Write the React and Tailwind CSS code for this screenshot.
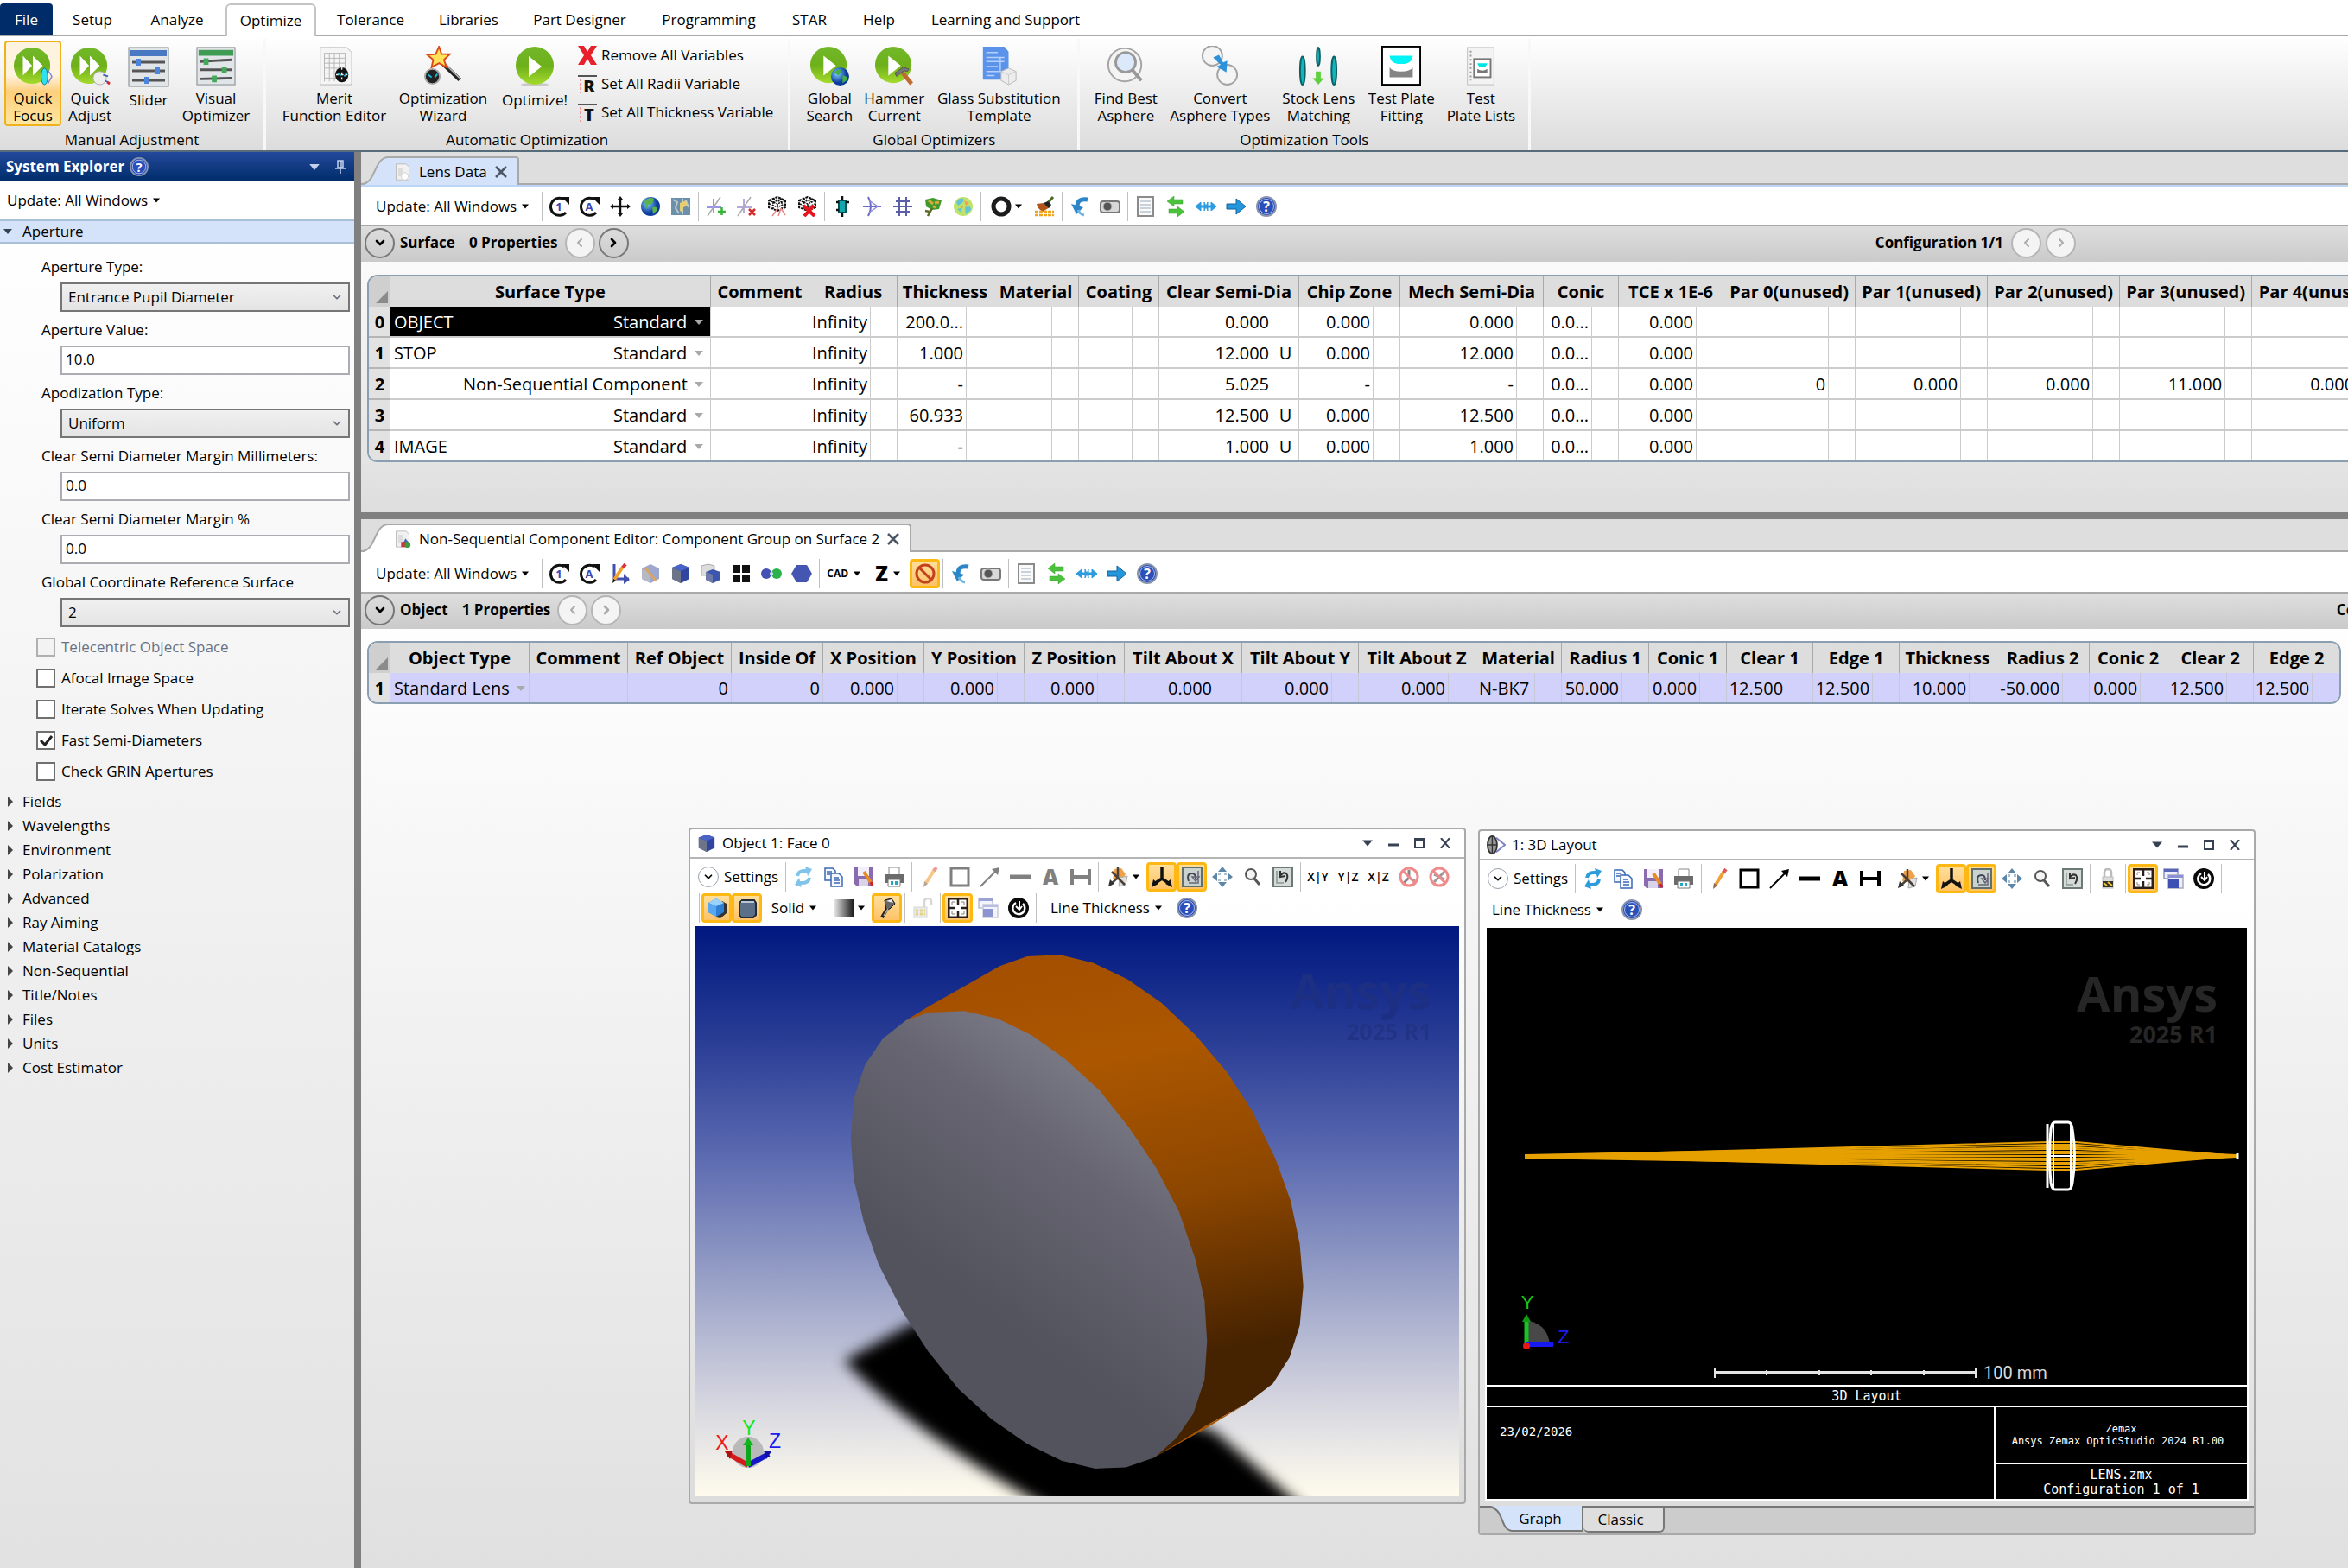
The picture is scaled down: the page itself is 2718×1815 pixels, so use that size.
import { ChevronDown, ChevronLeft, ChevronRight } from 'lucide-react';
import clsx from 'clsx';

const menuTabs = [
  { label: 'Setup', width: 'w-[92px]' },
  { label: 'Analyze', width: 'w-[104px]' },
  { label: 'Optimize', width: 'w-[105px]', active: true },
  { label: 'Tolerance', width: 'w-[118px]' },
  { label: 'Libraries', width: 'w-[109px]' },
  { label: 'Part Designer', width: 'w-[148px]' },
  { label: 'Programming', width: 'w-[151px]' },
  { label: 'STAR', width: 'w-[82px]' },
  { label: 'Help', width: 'w-[79px]' },
  { label: 'Learning and Support', width: 'w-[214px]' },
];

const ribbonGroups = [
  {
    title: 'Manual Adjustment',
    pad: 'pl-[5px] pr-3',
    buttons: [
      { lines: ['Quick', 'Focus'], icon: 'quickFocus', width: 'w-[66px]', active: true },
      { lines: ['Quick', 'Adjust'], icon: 'quickAdjust', width: 'w-[66px]' },
      { lines: ['Slider'], icon: 'slider', width: 'w-[70px]' },
      { lines: ['Visual', 'Optimizer'], icon: 'visualOptimizer', width: 'w-[86px]' },
    ],
  },
  {
    title: 'Automatic Optimization',
    pad: 'pl-4 pr-[17px]',
    buttons: [
      { lines: ['Merit', 'Function Editor'], icon: 'merit', width: 'w-[126px]' },
      { lines: ['Optimization', 'Wizard'], icon: 'wizard', width: 'w-[126px]' },
      { lines: ['Optimize!'], icon: 'optimize', width: 'w-[86px]' },
    ],
    list: [
      { label: 'Remove All Variables', icon: 'removeVars' },
      { label: 'Set All Radii Variable', icon: 'setRadii' },
      { label: 'Set All Thickness Variable', icon: 'setThickness' },
    ],
  },
  {
    title: 'Global Optimizers',
    pad: 'px-2',
    buttons: [
      { lines: ['Global', 'Search'], icon: 'globalSearch', width: 'w-[74px]' },
      { lines: ['Hammer', 'Current'], icon: 'hammer', width: 'w-[76px]' },
      { lines: ['Glass Substitution', 'Template'], icon: 'glass', width: 'w-[166px]' },
    ],
  },
  {
    title: 'Optimization Tools',
    pad: 'pl-[7px] pr-2',
    buttons: [
      { lines: ['Find Best', 'Asphere'], icon: 'findAsphere', width: 'w-[92px]' },
      { lines: ['Convert', 'Asphere Types'], icon: 'convert', width: 'w-[126px]' },
      { lines: ['Stock Lens', 'Matching'], icon: 'stockLens', width: 'w-[102px]' },
      { lines: ['Test Plate', 'Fitting'], icon: 'plateFitting', width: 'w-[90px]' },
      { lines: ['Test', 'Plate Lists'], icon: 'plateLists', width: 'w-[94px]' },
    ],
  },
];

const apertureFields = [
  { id: 'ap-type', label: 'Aperture Type:', kind: 'select', value: 'Entrance Pupil Diameter' },
  { id: 'ap-value', label: 'Aperture Value:', kind: 'text', value: '10.0' },
  { id: 'apod', label: 'Apodization Type:', kind: 'select', value: 'Uniform' },
  { id: 'margin-mm', label: 'Clear Semi Diameter Margin Millimeters:', kind: 'text', value: '0.0' },
  { id: 'margin-pct', label: 'Clear Semi Diameter Margin %', kind: 'text', value: '0.0' },
  { id: 'gcrs', label: 'Global Coordinate Reference Surface', kind: 'select', value: '2' },
];

const apertureChecks = [
  { label: 'Telecentric Object Space', disabled: true },
  { label: 'Afocal Image Space' },
  { label: 'Iterate Solves When Updating' },
  { label: 'Fast Semi-Diameters', checked: true },
  { label: 'Check GRIN Apertures' },
];

const explorerSections = [
  'Fields', 'Wavelengths', 'Environment', 'Polarization', 'Advanced', 'Ray Aiming',
  'Material Catalogs', 'Non-Sequential', 'Title/Notes', 'Files', 'Units', 'Cost Estimator',
];

const lensColumns = [
  { label: 'Surface Type', width: 'w-[371px]', type: true },
  { label: 'Comment', width: 'w-[114px]' },
  { label: 'Radius', width: 'w-[71px]', solve: true },
  { label: 'Thickness', width: 'w-[80px]', solve: true },
  { label: 'Material', width: 'w-[68px]', solve: true },
  { label: 'Coating', width: 'w-[62px]', solve: true },
  { label: 'Clear Semi-Dia', width: 'w-[131px]', solve: true },
  { label: 'Chip Zone', width: 'w-[86px]', solve: true },
  { label: 'Mech Semi-Dia', width: 'w-[135px]', solve: true },
  { label: 'Conic', width: 'w-[56px]', solve: true },
  { label: 'TCE x 1E-6', width: 'w-[90px]', solve: true },
  { label: 'Par 0(unused)', width: 'w-[122px]', solve: true },
  { label: 'Par 1(unused)', width: 'w-[122px]', solve: true },
  { label: 'Par 2(unused)', width: 'w-[122px]', solve: true },
  { label: 'Par 3(unused)', width: 'w-[122px]', solve: true },
  { label: 'Par 4(unused)', width: 'w-[122px]', solve: true },
];

const lensRows = [
  { id: 0, name: 'OBJECT', type: 'Standard', selected: true, cells: ['', 'Infinity', '200.0...', '', '', '0.000', '0.000', '0.000', '0.0...', '0.000', '', '', '', '', ''] },
  { id: 1, name: 'STOP', type: 'Standard', cells: ['', 'Infinity', '1.000', '', '', '12.000', '0.000', '12.000', '0.0...', '0.000', '', '', '', '', ''], flags: { 5: 'U' } },
  { id: 2, name: '', type: 'Non-Sequential Component', cells: ['', 'Infinity', '-', '', '', '5.025', '-', '-', '0.0...', '0.000', '0', '0.000', '0.000', '11.000', '0.000'] },
  { id: 3, name: '', type: 'Standard', cells: ['', 'Infinity', '60.933', '', '', '12.500', '0.000', '12.500', '0.0...', '0.000', '', '', '', '', ''], flags: { 5: 'U' } },
  { id: 4, name: 'IMAGE', type: 'Standard', cells: ['', 'Infinity', '-', '', '', '1.000', '0.000', '1.000', '0.0...', '0.000', '', '', '', '', ''], flags: { 5: 'U' } },
];

const objectColumns = [
  { label: 'Object Type', width: 'w-[161px]', type: true },
  { label: 'Comment', width: 'w-[114px]' },
  { label: 'Ref Object', width: 'w-[120px]' },
  { label: 'Inside Of', width: 'w-[106px]' },
  { label: 'X Position', width: 'w-[86px]', solve: true },
  { label: 'Y Position', width: 'w-[85px]', solve: true },
  { label: 'Z Position', width: 'w-[85px]', solve: true },
  { label: 'Tilt About X', width: 'w-[105px]', solve: true },
  { label: 'Tilt About Y', width: 'w-[104px]', solve: true },
  { label: 'Tilt About Z', width: 'w-[104px]', solve: true },
  { label: 'Material', width: 'w-[69px]', solve: true },
  { label: 'Radius 1', width: 'w-[70px]', solve: true },
  { label: 'Conic 1', width: 'w-[59px]', solve: true },
  { label: 'Clear 1', width: 'w-[69px]', solve: true },
  { label: 'Edge 1', width: 'w-[69px]', solve: true },
  { label: 'Thickness', width: 'w-[81px]', solve: true },
  { label: 'Radius 2', width: 'w-[77px]', solve: true },
  { label: 'Conic 2', width: 'w-[59px]', solve: true },
  { label: 'Clear 2', width: 'w-[69px]', solve: true },
  { label: 'Edge 2', width: 'w-[68px]', solve: true },
];

const objectRows = [
  {
    id: 1,
    name: '',
    type: 'Standard Lens',
    cells: ['', '0', '0', '0.000', '0.000', '0.000', '0.000', '0.000', '0.000', 'N-BK7', '50.000', '0.000', '12.500', '12.500', '10.000', '-50.000', '0.000', '12.500', '12.500'],
  },
];

// 48 x 48 ribbon drawings
const bigIcons = {
  quickFocus: (
    <>
      <circle cx="23" cy="24" r="22" fill="url(#green)" />
      <path d="M12 12l11 12-11 12zM24 12l12 12-12 12z" fill="#fff" />
      <ellipse cx="38" cy="37" rx="4" ry="10" fill="#2fe0ee" stroke="#0e7f95" />
      <path d="M42 29l5 8-5 9" fill="none" stroke="#7d86d8" strokeWidth="1.5" />
    </>
  ),
  quickAdjust: (
    <>
      <circle cx="23" cy="24" r="22" fill="url(#green)" />
      <path d="M12 12l11 12-11 12zM24 12l12 12-12 12z" fill="#fff" />
      <circle cx="36" cy="39" r="8" fill="#eee" stroke="#aaa" />
      <path d="M40 35l6 2M42 42l6 3" stroke="#3f64b5" strokeWidth="2" />
      <path d="M45 44l3 2" stroke="#e02525" strokeWidth="3" />
    </>
  ),
  slider: (
    <>
      <rect x="1" y="2" width="46" height="45" fill="#e2e5e8" stroke="#7d858c" />
      <rect x="3" y="5" width="42" height="7" fill="#4a79c4" />
      <path d="M5 19h38M5 29h38M5 40h38" stroke="#555" strokeWidth="3" />
      <path d="M9 15h6v8H9zM31 25h6v8h-6zM19 36h6v8h-6z" fill="#4c86dc" />
    </>
  ),
  visualOptimizer: (
    <>
      <rect x="1" y="2" width="46" height="45" fill="#e2e5e8" stroke="#7d858c" />
      <rect x="3" y="5" width="42" height="7" fill="#3f9a52" />
      <path d="M5 19l38-2M5 29h38M5 40l38-1" stroke="#555" strokeWidth="3" />
      <path d="M9 15h6v8H9zM31 25h6v8h-6zM19 36h6v8h-6z" fill="#45a95c" />
    </>
  ),
  merit: (
    <>
      <path d="M7 2h32l6 6v39H7z" fill="#f5f5f5" stroke="#b5b5b5" />
      <path d="M12 9h26M12 15h26M12 21h26M12 27h26M12 33h26M12 39h26M12 9v34M18 9v34M24 9v34M30 9v34M37 9v34" stroke="#b5b5b5" />
      <ellipse cx="33" cy="35" rx="8" ry="9" fill="#111" />
      <path d="M33 26v18M26 35h14" stroke="#eee" strokeWidth="1.5" strokeDasharray="3 3" />
      <path d="M28 33l4 3M36 37l3-4" stroke="#19b7d8" strokeWidth="2" />
    </>
  ),
  wizard: (
    <>
      <path d="M24 22l20 19" stroke="#222" strokeWidth="5" />
      <path d="M26 22l18 17" stroke="#bbb" strokeWidth="1.5" />
      <path d="M19 1l3 9 10 0-7 7 3 9-9-5-9 5 2-9-7-6 10-1z" fill="#ffe25a" stroke="#dd4a1a" strokeWidth="2" />
      <ellipse cx="11" cy="37" rx="9" ry="9" fill="#222" stroke="#aaa" strokeWidth="2" />
      <path d="M6 35l4 3M14 38l3-4" stroke="#19b7d8" strokeWidth="2" />
    </>
  ),
  optimize: (
    <>
      <ellipse cx="24" cy="45" rx="16" ry="2" fill="#c9c9c9" />
      <circle cx="24" cy="23" r="22" fill="url(#green)" />
      <path d="M17 12l15 12-15 12z" fill="#fff" />
    </>
  ),
  globalSearch: (
    <>
      <circle cx="23" cy="23" r="22" fill="url(#green)" />
      <path d="M17 12l15 12-15 12z" fill="#fff" />
      <circle cx="37" cy="37" r="11" fill="url(#globe)" />
      <path d="M30 32q5-5 9-2l-4 6zM40 36q6 0 6 5l-6 4z" fill="#45b049" />
    </>
  ),
  hammer: (
    <>
      <circle cx="23" cy="23" r="22" fill="url(#green)" />
      <path d="M17 12l15 12-15 12z" fill="#fff" />
      <path d="M33 31l12 15" stroke="#bd6a33" strokeWidth="5" />
      <path d="M25 33l10-7 7 2-2 3-4-1-9 7z" fill="#777" stroke="#555" />
    </>
  ),
  glass: (
    <>
      <path d="M5 1h26l5 6v34H5z" fill="#5b93ea" />
      <path d="M9 8h14M9 14h22M9 19h22M9 25h14M9 31h22M9 36h10M26 14v16" stroke="#b5d2ff" strokeWidth="1.5" />
      <path d="M36 27l9 4v11l-9 5-9-5V31z" fill="#ececec" stroke="#b9b9b9" />
      <path d="M27 31l9 4 9-4M36 35v12" stroke="#c9c9c9" fill="none" />
    </>
  ),
  findAsphere: (
    <>
      <circle cx="23" cy="23" r="20" fill="#f4f4f4" stroke="#a4a4a4" strokeWidth="2" />
      <ellipse cx="24" cy="20" rx="12" ry="12" fill="#dce9fa" stroke="#999" strokeWidth="3" />
      <path d="M32 29l11 13" stroke="#999" strokeWidth="4" />
    </>
  ),
  convert: (
    <>
      <circle cx="15" cy="12" r="12" fill="#f4f4f4" stroke="#a4a4a4" strokeWidth="2" />
      <circle cx="33" cy="35" r="12" fill="#f4f4f4" stroke="#a4a4a4" strokeWidth="2" />
      <path d="M16 14l7-3 5 9 5-2-1 14-12-7 5-2z" fill="#2d92dc" />
    </>
  ),
  stockLens: (
    <>
      <g fill="#12b5bb" stroke="#0b6166" strokeWidth="2">
        <ellipse cx="5" cy="30" rx="3" ry="17" />
        <ellipse cx="24" cy="13" rx="2" ry="11" />
        <ellipse cx="43" cy="30" rx="3" ry="17" />
      </g>
      <path d="M21 31h6v8h4l-7 8-7-8h4z" fill="#5fd13e" />
    </>
  ),
  plateFitting: (
    <>
      <rect x="1" y="1" width="46" height="46" fill="#fff" stroke="#000" strokeWidth="2" />
      <path d="M10 12h28q-1 9-10 10h-8q-9-1-10-10z" fill="#00f4f6" />
      <path d="M10 26q3 5 14 5t14-5v12H10z" fill="#848484" />
    </>
  ),
  plateLists: (
    <>
      <rect x="8" y="2" width="32" height="45" fill="#f3f3f3" stroke="#bdbdbd" />
      <path d="M12 6v36" stroke="#999" strokeWidth="2" strokeDasharray="2 3" />
      <rect x="16" y="16" width="20" height="22" fill="#fff" stroke="#777" strokeWidth="2" />
      <path d="M20 21h12q-1 5-6 5t-6-5z" fill="#00e4e6" />
      <path d="M20 28q6 4 12 0v5H20z" fill="#777" />
    </>
  ),
};

const blackLoop = (
  <>
    <path d="M17 4A10 10 0 1 0 19 19" fill="none" stroke="#111" strokeWidth="3" />
    <path d="M14 1h9v9z" fill="#111" />
  </>
);
const noSign = (color) => (
  <>
    <circle cx="12" cy="12" r="10" fill="none" stroke={color} strokeWidth="3" />
    <path d="M5 5l14 14" stroke={color} strokeWidth="3" />
  </>
);

// 24 x 24 toolbar drawings
const icons = {
  update1: (
    <>
      {blackLoop}
      <text x="11" y="17" fontSize="13" fontWeight="700" textAnchor="middle" fill="#3b46b8">1</text>
    </>
  ),
  updateA: (
    <>
      {blackLoop}
      <text x="11" y="17" fontSize="13" fontWeight="700" textAnchor="middle" fill="#3b46b8">A</text>
    </>
  ),
  cross: (
    <>
      <path d="M12 2v20M2 12h20" stroke="#111" strokeWidth="2.500" />
      <path d="M12 0l3 4H9zM12 24l3-4H9zM0 12l4-3v6zM24 12l-4-3v6z" fill="#111" />
    </>
  ),
  globe: (
    <>
      <circle cx="12" cy="12" r="11" fill="url(#globe)" />
      <path d="M5 6q6-6 11-3l-2 6-5 1-2 5zM14 13q6-2 6 3l-5 5z" fill="#58b34e" />
    </>
  ),
  map: (
    <>
      <rect x="1" y="2" width="22" height="20" fill="#6c8faa" />
      <path d="M3 4l5 3-2 7 4 6M14 3v18M18 5l3 8" stroke="#b9c9cf" strokeWidth="2" fill="none" />
      <path d="M11 8l7-3 2 6-5 2-1 6-3-2z" fill="#e6cf72" />
    </>
  ),
  axisAdd: (
    <>
      <path d="M1 13h17M9 3v17" stroke="#9a94e6" strokeWidth="2" />
      <path d="M17 1L2 23" stroke="#aaa" strokeWidth="1.500" />
      <path d="M14 18h9M18.500 13v9" stroke="#35b535" strokeWidth="2.500" />
    </>
  ),
  axisDel: (
    <>
      <path d="M1 13h17M9 3v17" stroke="#b5a9e0" strokeWidth="2" />
      <path d="M17 1L2 23" stroke="#aaa" strokeWidth="1.500" />
      <path d="M15 15l7 7M22 15l-7 7" stroke="#d62a2a" strokeWidth="2.500" />
    </>
  ),
  meshBox: (
    <>
      <path d="M3 5l10-4 9 4v8l-9 4-10-4z" fill="#fff" stroke="#111" strokeWidth="2" strokeDasharray="3 1" />
      <path d="M3 5l10 4 9-4M13 9v8M4 9l9 4 8-4M8 3l10 4M8 7v8M18 3L8 7M18 7v8" stroke="#111" strokeWidth="1.500" fill="none" strokeDasharray="2 1" />
      <path d="M7 23l7-10M14 23l3-9M22 22l-5-8" stroke="#e68a8a" strokeWidth="1.500" />
    </>
  ),
  meshBoxDel: (
    <>
      <path d="M3 5l10-4 9 4v8l-9 4-10-4z" fill="#fff" stroke="#111" strokeWidth="2" strokeDasharray="3 1" />
      <path d="M3 5l10 4 9-4M13 9v8M4 9l9 4 8-4M8 3l10 4M8 7v8M18 3L8 7" stroke="#111" strokeWidth="1.500" fill="none" strokeDasharray="2 1" />
      <path d="M8 11l13 12M20 11L9 23" stroke="#e6141e" strokeWidth="4" />
    </>
  ),
  tealLens: (
    <>
      <path d="M8 5h8v14H8z" fill="#12a7ac" stroke="#055" strokeWidth="2" />
      <path d="M12 0v5M12 19v5M5 7h3M16 7h4M5 16h3" stroke="#111" strokeWidth="2.500" />
    </>
  ),
  curveAxis: (
    <>
      <path d="M7 1q6 11 0 22M1 12h21" fill="none" stroke="#6a6ac8" strokeWidth="2" />
      <path d="M8 5l10 7-10 7" fill="none" stroke="#8d8dd8" strokeWidth="1.500" />
    </>
  ),
  gridLens: (
    <path d="M8 1v22M16 1v22M1 12h22M4 6h16M4 18h16" fill="none" stroke="#5a5fa8" strokeWidth="2" />
  ),
  tree: (
    <>
      <path d="M3 4l9-2 10 3-3 10-8 1-7-4z" fill="#3f9a2c" />
      <path d="M7 5l5 4M14 8l5-1M12 12l4 1" stroke="#d8a83c" strokeWidth="3" />
      <path d="M11 14l-5 9M3 17l5 1" stroke="#5c6b2a" strokeWidth="2.500" />
    </>
  ),
  blobMap: (
    <>
      <circle cx="12" cy="12" r="11" fill="#bfe36a" />
      <path d="M4 7q5-7 9-3l-2 4-5 3zM14 13q7-3 7 3l-6 5zM5 15l4-1 2 6z" fill="#63c4d9" />
      <path d="M13 5l6 3-4 3zM8 11l4 1-2 4z" fill="#f0a050" />
    </>
  ),
  ring: <circle cx="12" cy="12" r="9" fill="none" stroke="#1c1c1c" strokeWidth="5" />,
  brush: (
    <>
      <path d="M22 1l-9 10" stroke="#4b6b2a" strokeWidth="3" />
      <path d="M3 9l8-1 7 5-8 5q-6-3-7-9z" fill="#b0561c" />
      <path d="M11 8l5-2 4 4-3 4z" fill="#222" />
      <path d="M1 18h22M1 22h22" stroke="#f0a51c" strokeWidth="2.500" strokeDasharray="4 1" />
    </>
  ),
  undo: (
    <>
      <path d="M21 4Q9 2 9 12" fill="none" stroke="#2b86c8" strokeWidth="5" />
      <path d="M2 9l14 4-8 8z" fill="#2b86c8" />
      <path d="M10 16q2 5 7 6" fill="none" stroke="#6fb4e2" strokeWidth="3" />
    </>
  ),
  toggle: (
    <>
      <rect x="1" y="6" width="22" height="13" rx="3" fill="#d8d8d8" stroke="#777" strokeWidth="2" />
      <ellipse cx="9" cy="12" rx="5" ry="5" fill="#555" stroke="#bbb" />
    </>
  ),
  doc: (
    <>
      <rect x="3" y="1" width="18" height="22" fill="#fafafa" stroke="#8b8b8b" strokeWidth="2" />
      <path d="M6 6h12M6 10h12M6 14h12M6 18h12" stroke="#b9c3cf" strokeWidth="1.500" />
    </>
  ),
  swap: (
    <g fill="#4cc23c" stroke="#3a9e2e" strokeWidth="0.500">
      <path d="M2 6l8-6v4h10v5H10v3z" />
      <path d="M22 18l-8-6v3H4v5h10v4z" />
    </g>
  ),
  blueBoth: <path d="M0 12l6-5v4h4V7l2 5 2-5v4h4V7l6 5-6 5v-4h-4v4l-2-5-2 5v-4H6v4z" fill="#2d9be0" stroke="#2d9be0" />,
  blueRight: <path d="M1 9h11V3l11 9-11 9v-6H1z" fill="#2496dc" stroke="#12639c" />,
  help: (
    <>
      <circle cx="12" cy="12" r="11" fill="#2b4fb8" stroke="#8a94ad" strokeWidth="2" />
      <circle cx="12" cy="12" r="8.500" fill="none" stroke="#a9bdf0" />
      <text x="12" y="18" fontSize="16" fontWeight="700" textAnchor="middle" fill="#fff">?</text>
    </>
  ),
  editAxis: (
    <>
      <path d="M5 1v17h17" fill="none" stroke="#4450b0" strokeWidth="3" />
      <path d="M16 12l7 7-7 5z" fill="#4450b0" />
      <path d="M15 4L5 19" stroke="#f0a02c" strokeWidth="4" />
      <path d="M18 1l-3 4" stroke="#d6323c" strokeWidth="4" />
      <path d="M3 23l1-5 3 2z" fill="#111" />
    </>
  ),
  cubeEdit: (
    <>
      <path d="M12 1l10 5v12l-10 5L2 18V6z" fill="#9da7cf" />
      <path d="M12 11v12L2 18V6z" fill="#b6b9c4" />
      <path d="M6 5l12 15" stroke="#d8a562" strokeWidth="3" />
    </>
  ),
  cube: (
    <>
      <path d="M12 1l10 4v13l-10 5L2 18V5z" fill="#2f459f" />
      <path d="M12 9v14L2 18V5z" fill="#6d7488" />
      <path d="M12 1l10 4-10 4L2 5z" fill="#4a63c8" />
    </>
  ),
  cubes: (
    <>
      <path d="M1 3l8-2 7 2v11H1z" fill="#ddd" stroke="#aaa" />
      <path d="M14 7l9 3v9l-9 4-8-4v-9z" fill="#3c55ad" />
      <path d="M14 13v10l-8-4v-9z" fill="#6d7aa8" />
    </>
  ),
  quad: <path d="M2 2h9v9H2zM13 2h9v9h-9zM2 13h9v9H2zM13 13h9v9h-9z" fill="#111" />,
  venn: (
    <>
      <circle cx="6" cy="12" r="6" fill="#4450b4" />
      <circle cx="18" cy="12" r="6" fill="#2cb24c" />
      <circle cx="12" cy="12" r="2" fill="#cfe0ee" />
    </>
  ),
  hexagon: <path d="M6 2h12l6 10-6 10H6L0 12z" fill="#4456b2" />,
  noEntry: noSign('#c4411f'),
  noAxes: (
    <>
      <path d="M12 4v9l-6 6M12 13l7 4" stroke="#888" strokeWidth="3" fill="none" />
      {noSign('#f08a8a')}
    </>
  ),
  noScale: (
    <>
      <path d="M6 18L18 6M6 9l12 6" stroke="#999" strokeWidth="3" />
      {noSign('#f08a8a')}
    </>
  ),
  refresh: (
    <g fill="none" stroke="#2c9ddc" strokeWidth="4">
      <path d="M5 11q1-6 8-6h3M19 13q-1 6-8 6H8" />
      <path d="M14 0l8 3-5 8zM10 24l-8-3 5-8z" fill="#2c9ddc" stroke="none" />
    </g>
  ),
  copy: (
    <g fill="#f5f9ff" stroke="#3b68b5" strokeWidth="1.500">
      <path d="M2 2h9l3 3v11H2z" />
      <path d="M9 8h9l4 4v11H9z" />
      <path d="M4 6h6M4 9h4M12 13h6M12 16h7M12 19h7" />
    </g>
  ),
  save: (
    <>
      <path d="M1 1h22v22H4l-3-3z" fill="#8a6bb0" />
      <path d="M5 1h13v10H5z" fill="#f3effa" />
      <path d="M6 15h11v8H6z" fill="#d9d2e8" />
      <path d="M12 6l9 14" stroke="#e88b24" strokeWidth="4" />
      <path d="M20 18l2 4" stroke="#c22" strokeWidth="3" />
    </>
  ),
  print: (
    <>
      <path d="M6 1h12v9H6z" fill="#fff" stroke="#888" />
      <path d="M1 9h22v10H1z" fill="#6b6b6b" />
      <path d="M5 15h14v8H5z" fill="#fff" stroke="#777" />
      <path d="M8 17h3v4H8zM13 17h3v4h-3z" fill="#23a4c8" />
    </>
  ),
  pencil: (
    <>
      <path d="M18 3L8 19" stroke="#f0a23a" strokeWidth="4" />
      <path d="M20 1l-3 4" stroke="#e05a5a" strokeWidth="4" />
      <path d="M6 17l4 3-5 4z" fill="#8a6a4a" />
    </>
  ),
  square: <rect x="2" y="2" width="20" height="20" fill="none" stroke="currentColor" strokeWidth="3" />,
  arrow: (
    <>
      <path d="M1 23L18 6" stroke="currentColor" strokeWidth="2" />
      <path d="M23 1l-2 9-7-7z" fill="currentColor" />
    </>
  ),
  line: <path d="M0 12h24" stroke="currentColor" strokeWidth="5" />,
  textA: <text x="12" y="21" fontSize="25" fontWeight="800" textAnchor="middle" fill="currentColor">A</text>,
  caliper: <path d="M2 3v18M22 3v18M2 12h20" stroke="currentColor" strokeWidth="4" />,
  axes: (
    <>
      <path d="M7 3l8-1 5 7-5 7-10-1z" fill="#f0a146" />
      <path d="M13 13l9-2-2 10-8 2z" fill="#e2e2e2" stroke="#aaa" />
      <path d="M11 1v12L2 21M11 13l8 8M11 13l-7-7" fill="none" stroke="#4a4038" strokeWidth="2.500" />
      <path d="M0 23l2-8 5 5z" fill="#333" />
    </>
  ),
  triad: (
    <>
      <path d="M12 0v14L3 20M12 14l9 6" fill="none" stroke="#111" strokeWidth="3.500" />
      <path d="M0 24l2-9 6 5zM24 24l-2-9-6 5z" fill="#111" />
    </>
  ),
  rotateBox: (
    <>
      <rect x="1" y="1" width="22" height="22" fill="#c9d2cf" stroke="#5f6f6b" strokeWidth="2" />
      <path d="M8 17q-3-9 4-9 4 0 4 6" fill="none" stroke="#445" strokeWidth="2" />
      <path d="M12 12h8l-4 5zM19 5v14H8" fill="none" stroke="#667" strokeWidth="1.500" />
    </>
  ),
  undoBox: (
    <>
      <rect x="1" y="1" width="22" height="22" fill="#d5dbd8" stroke="#6b7a76" strokeWidth="2" />
      <path d="M5 5v14h8" stroke="#8b9894" fill="none" strokeWidth="1.500" />
      <path d="M10 10q2-4 6-2 3 4-1 10M9 5l0 7 6-1" fill="none" stroke="#333" strokeWidth="2" />
    </>
  ),
  move: (
    <g fill="#5d86a8">
      <path d="M12 0l5 6H7zM12 24l5-6H7zM0 12l6-5v10zM24 12l-6-5v10z" />
      <path d="M7 7h3v3H7zM14 7h3v3h-3zM7 14h3v3H7zM14 14h3v3h-3z" fill="#a9c0d2" />
    </g>
  ),
  search: (
    <>
      <circle cx="10" cy="9" r="6" fill="#f4f4f4" stroke="#555" strokeWidth="2" />
      <path d="M14 14l6 7" stroke="#555" strokeWidth="3" />
    </>
  ),
  blueCube: (
    <>
      <path d="M18 4l5 3v11l-7 6-5-1z" fill="#333" />
      <path d="M11 1l9 5v11l-9 5-9-5V6z" fill="#2f7fd6" />
      <path d="M11 1l9 5-9 4-9-4z" fill="#9ad2ff" />
      <path d="M11 10v12l-9-5V6z" fill="#58a8f0" />
    </>
  ),
  cylinder: (
    <>
      <path d="M6 3h14l2 3v14l-3 3H5l-2-3V6z" fill="#5b7088" stroke="#222b38" strokeWidth="2" />
      <path d="M5 5h15" stroke="#b8c7d8" strokeWidth="2" />
    </>
  ),
  gradient: <rect x="0" y="2" width="24" height="20" fill="url(#bw)" />,
  flashlight: (
    <>
      <path d="M13 11L6 23" stroke="#222" strokeWidth="4" />
      <path d="M9 3l8-2 4 6-6 6-4 1z" fill="#666" stroke="#111" />
      <path d="M11 4l6-2 2 4z" fill="#eee" />
      <path d="M13 13l-5 8" stroke="#aaa" strokeWidth="1.500" />
    </>
  ),
  unlock: (
    <>
      <path d="M14 11V5q0-4 4-4t4 4v4" fill="none" stroke="#bbb" strokeWidth="2.500" />
      <rect x="2" y="11" width="15" height="12" fill="#ddd" stroke="#bbb" />
      <path d="M4 15h11M4 19h11" stroke="#cfb93a" strokeWidth="3" strokeDasharray="3 2" />
    </>
  ),
  lock: (
    <>
      <path d="M8 11V5q0-4 4-4t4 4v6" fill="none" stroke="#bbb" strokeWidth="2.500" />
      <rect x="6" y="10" width="12" height="13" fill="#ddd" stroke="#bbb" />
      <rect x="6" y="15" width="12" height="7" fill="#333" />
      <path d="M7 17l4 3M12 16l5 4" stroke="#f2c62c" strokeWidth="2" />
    </>
  ),
  target: (
    <>
      <rect x="1" y="1" width="22" height="22" fill="#fff" stroke="#2a2018" strokeWidth="3" />
      <path d="M12 2v7M12 15v7M2 12h7M15 12h7" stroke="#2a2018" strokeWidth="2.500" />
      <path d="M5 8V5h3M16 5h3v3M5 16v3h3M16 19h3v-3" fill="none" stroke="#8a8078" />
    </>
  ),
  windows: (
    <>
      <path d="M1 1h16v11H1z" fill="#eef" stroke="#8a92c4" strokeWidth="1.500" />
      <path d="M1 1h16v3H1z" fill="#5a66b8" />
      <path d="M6 8h17v15H6z" fill="#eef" stroke="#aab" strokeWidth="1.500" />
      <path d="M6 13h12v10H6z" fill="#3f50b4" />
      <path d="M6 8h17v3H6z" fill="#8a92d4" />
    </>
  ),
  clock: (
    <>
      <circle cx="12" cy="12" r="12" fill="#0a0a0a" />
      <path d="M9 6a7 7 0 1 0 8 1" fill="none" stroke="#fff" strokeWidth="2.500" />
      <path d="M13 4v8M9 10l4 4 3-4" stroke="#fff" fill="none" strokeWidth="2" />
    </>
  ),
  removeVars: <path d="M1 1h7l4 7 4-7h7l-7 11 7 11h-7l-4-7-4 7H1l7-11z" fill="#e8202c" />,
  setRadii: (
    <>
      <path d="M1 3h22" stroke="#555" strokeWidth="2" />
      <path d="M4 6v17" stroke="#ee9a9a" strokeWidth="2" strokeDasharray="3 2" />
      <text x="14" y="22" fontSize="20" fontWeight="800" textAnchor="middle" fill="#111">R</text>
    </>
  ),
  setThickness: (
    <>
      <path d="M1 3h22" stroke="#555" strokeWidth="2" />
      <path d="M4 6v17" stroke="#ee9a9a" strokeWidth="2" strokeDasharray="3 2" />
      <text x="14" y="22" fontSize="20" fontWeight="800" textAnchor="middle" fill="#111">T</text>
    </>
  ),
  lensDoc: (
    <>
      <path d="M3 1h14l4 4v18H3z" fill="#f1f1f1" stroke="#b5b5b5" />
      <path d="M6 6h7v12H6z" fill="#ddd" />
      <circle cx="15" cy="18" r="5" fill="#fff" stroke="#ccc" />
    </>
  ),
  nscDoc: (
    <>
      <path d="M3 1h14l4 4v18H3z" fill="#f1f1f1" stroke="#b5b5b5" />
      <path d="M6 6h7v12H6z" fill="#ddd" />
      <path d="M16 11l5 6h-8z" fill="#4c69b0" />
      <path d="M10 16h7v7h-7z" fill="#d02f3c" />
      <circle cx="19" cy="20" r="4" fill="#3a9e3c" />
    </>
  ),
  layout: (
    <>
      <ellipse cx="7" cy="12" rx="6" ry="11" fill="#999" stroke="#333" strokeWidth="2" />
      <path d="M1 12h12M7 1v22" stroke="#333" strokeWidth="1.500" />
      <path d="M12 3l11 9-11 9" fill="none" stroke="#7a7fc8" strokeWidth="2" />
    </>
  ),
};

function Icon({ name, className }) {
  return (
    <svg viewBox="0 0 24 24" className={clsx('shrink-0', className || 'size-6')} aria-hidden="true">
      {icons[name]}
    </svg>
  );
}

function Defs() {
  return (
    <svg className="absolute size-0" aria-hidden="true">
      <defs>
        <linearGradient id="green" x1="0" y1="0" x2="0" y2="1">
          <stop offset="0" stopColor="#72b82a" />
          <stop offset="0.5" stopColor="#6db01a" />
          <stop offset="1" stopColor="#a4da2c" />
        </linearGradient>
        <radialGradient id="globe" cx="0.35" cy="0.35">
          <stop offset="0" stopColor="#7fd0ff" />
          <stop offset="1" stopColor="#0d3c9c" />
        </radialGradient>
        <linearGradient id="bw">
          <stop offset="0" stopColor="#eee" />
          <stop offset="1" stopColor="#111" />
        </linearGradient>
      </defs>
    </svg>
  );
}

function Caret({ className }) {
  return (
    <svg viewBox="0 0 10 6" className={clsx('shrink-0', className || 'w-2.5 h-1.5')} aria-hidden="true">
      <path d="M0 0h10L5 6z" fill="currentColor" />
    </svg>
  );
}

function RibbonButton({ item }) {
  return (
    <button
      className={clsx(
        'flex h-[99px] flex-col items-center rounded-sm border-2 pt-1',
        item.width,
        item.active ? 'border-[#f0b21c] bg-linear-to-b from-[#fdf3df] from-40% via-[#fdcf7c] via-60% to-[#ffe6a0]' : 'border-transparent'
      )}
    >
      <svg viewBox="0 0 48 48" className="size-12" aria-hidden="true">{bigIcons[item.icon]}</svg>
      {item.lines.map((line) => (
        <span key={line} className="whitespace-nowrap leading-5 first-of-type:mt-[5px]">{line}</span>
      ))}
    </button>
  );
}

function Ribbon() {
  return (
    <header>
      <nav className="flex h-[42px] items-end border-b-2 border-[#a9a9a9] bg-white">
        <button className="h-9 w-[61px] rounded-t bg-[#002c6a] pt-0.5 text-white">File</button>
        {menuTabs.map((tab) => (
          <button
            key={tab.label}
            className={clsx(
              'shrink-0 whitespace-nowrap',
              tab.width,
              tab.active ? '-mb-0.5 mx-1 h-[38px] rounded-t-md border-2 border-b-0 border-[#c4c4c4] bg-white' : 'h-9 pt-0.5'
            )}
          >
            {tab.label}
          </button>
        ))}
      </nav>
      <div className="flex overflow-hidden border-b-2 border-[#566c7a] bg-linear-to-b from-white to-[#dcdcdc] pt-[3px]">
        {ribbonGroups.map((group) => (
          <section key={group.title} className="flex flex-col border-r-3 border-[#f8f8f8] pt-0.5">
            <div className={clsx('flex', group.pad)}>
              {group.buttons.map((item) => (
                <RibbonButton key={item.icon} item={item} />
              ))}
              {group.list && (
                <ul className="ml-1.5 flex flex-col">
                  {group.list.map((item) => (
                    <li key={item.label} className="flex h-[33px] items-center">
                      <button className="flex items-center gap-1 whitespace-nowrap">
                        <Icon name={item.icon} />
                        {item.label}
                      </button>
                    </li>
                  ))}
                </ul>
              )}
            </div>
            <h2 className="mt-1.5 pb-0.5 text-center leading-5">{group.title}</h2>
          </section>
        ))}
      </div>
    </header>
  );
}

function Field({ field }) {
  return (
    <div className="pl-12 pr-[5px]">
      <label htmlFor={field.id} className="mb-1.5 block leading-6">{field.label}</label>
      {field.kind === 'select' ? (
        <div className="relative ml-[22px]">
          <select id={field.id} className="h-[34px] w-full appearance-none border-2 border-[#767676] bg-linear-to-b from-[#f0f0f0] to-[#e4e4e4] px-[7px]">
            <option>{field.value}</option>
          </select>
          <ChevronDown className="absolute right-2 top-2.5 size-3.5 text-gray-500" strokeWidth={3} />
        </div>
      ) : (
        <input id={field.id} type="text" defaultValue={field.value} className="ml-[22px] block h-[34px] w-[335px] border-2 border-[#abadb3] bg-white px-1 pb-1" />
      )}
    </div>
  );
}

function SystemExplorer() {
  return (
    <aside className="flex w-[410px] shrink-0 flex-col">
      <div className="flex h-[34px] items-center bg-linear-to-b from-[#22499b] to-[#002c6a] pl-[7px] pr-2.5 text-white">
        <h2 className="font-bold">System Explorer</h2>
        <button className="ml-1.5" aria-label="Help"><Icon name="help" className="size-[22px]" /></button>
        <button className="ml-auto text-[#c4d0ea]" aria-label="Menu"><Caret className="h-[7px] w-3" /></button>
        <button className="ml-[18px] text-[#c4d0ea]" aria-label="Pin">
          <svg viewBox="0 0 12 16" className="h-4 w-3">
            <path d="M3 1h6v8H3zM7 1v8M0 10h12M6 10v6" fill="none" stroke="currentColor" strokeWidth="1.500" />
          </svg>
        </button>
      </div>
      <div className="flex h-11 items-center bg-white pl-2">
        <button className="flex items-center gap-1.5">Update: All Windows <Caret className="h-1.5 w-2" /></button>
      </div>
      <div className="flex flex-1 flex-col bg-linear-to-b from-white to-[#e2e2e2]">
        <button className="flex h-7 items-center gap-3 border-y-2 border-[#a8c0d8] bg-[#d4e3f9] pl-1 text-left">
          <Caret className="h-1.5 w-2.5 text-gray-700" />
          Aperture
        </button>
        <div className="flex flex-col gap-[9px] pt-[15px]">
          {apertureFields.map((field) => (
            <Field key={field.id} field={field} />
          ))}
        </div>
        <div className="pl-[42px] pt-[5px]">
          {apertureChecks.map((check) => (
            <label key={check.label} className={clsx('flex h-9 items-center gap-[7px]', check.disabled && 'text-gray-500')}>
              <span className="relative flex">
                <input
                  type="checkbox"
                  defaultChecked={check.checked}
                  disabled={check.disabled}
                  className="peer size-[22px] appearance-none border-2 border-[#707070] bg-white disabled:border-[#b0b0b0] disabled:bg-[#f3f3f3]"
                />
                <svg viewBox="0 0 22 22" className="pointer-events-none absolute inset-0 hidden size-[22px] peer-checked:block">
                  <path d="M5 11l5 5 8-10" fill="none" stroke="#222" strokeWidth="3" />
                </svg>
              </span>
              {check.label}
            </label>
          ))}
        </div>
        <ul className="pt-[3px]">
          {explorerSections.map((section) => (
            <li key={section}>
              <button className="flex h-7 items-center pl-[9px]">
                <svg viewBox="0 0 6 12" className="mr-[11px] h-3 w-1.5"><path d="M0 0l6 6-6 6z" fill="#444" /></svg>
                {section}
              </button>
            </li>
          ))}
        </ul>
      </div>
    </aside>
  );
}

function Sep() {
  return <span className="ml-[3px] mr-0.5 h-[34px] w-px shrink-0 bg-[#c0c0c0]" />;
}

// Toolbars are lists of icon names; 'sep' and small objects cover the rest.
function ToolItem({ item, faded }) {
  if (item === 'sep') return <Sep />;
  if (typeof item === 'string') {
    return (
      <button className="flex h-[34px] w-[35px] shrink-0 items-center justify-center" aria-label={item}>
        <Icon name={item} />
      </button>
    );
  }
  if (item.text) {
    return (
      <button className={clsx('flex h-[34px] shrink-0 items-center justify-center gap-1.5 whitespace-nowrap', item.className)}>
        {item.text}
        {item.caret && <Caret className="h-1.5 w-2" />}
      </button>
    );
  }
  return (
    <button
      aria-label={item.icon}
      className={clsx(
        'flex h-[34px] shrink-0 items-center justify-center gap-1',
        item.caret ? 'w-[53px]' : 'w-[35px]',
        item.on && 'rounded border-3 border-[#fdb813] bg-linear-to-b from-[#ffdf9b] to-[#ffc266]',
        faded && item.fade && 'opacity-60',
        item.grey && 'text-[#808080]'
      )}
    >
      <Icon name={item.icon} />
      {item.caret && <Caret className="h-1.5 w-2 text-black" />}
    </button>
  );
}

const updateMenu = { text: 'Update: All Windows', caret: true, className: 'pl-[17px] pr-3' };
const lensTools = [
  updateMenu, 'sep', 'update1', 'updateA', 'cross', 'globe', 'map', 'sep',
  'axisAdd', 'axisDel', 'meshBox', 'meshBoxDel', 'sep', 'tealLens', 'curveAxis', 'gridLens', 'tree', 'blobMap', 'sep',
  { icon: 'ring', caret: true }, 'brush', 'sep', 'undo', 'toggle', 'sep', 'doc', 'swap', 'blueBoth', 'blueRight', 'help',
];
const objectTools = [
  updateMenu, 'sep', 'update1', 'updateA', 'editAxis', 'cubeEdit', 'cube', 'cubes', 'quad', 'venn', 'hexagon', 'sep',
  { text: 'CAD', caret: true, className: 'w-[51px] text-xs font-bold' },
  { text: 'Z', caret: true, className: 'w-[51px] text-2xl font-extrabold' },
  { icon: 'noEntry', on: true }, 'sep', 'undo', 'toggle', 'sep', 'doc', 'swap', 'blueBoth', 'blueRight', 'help',
];

function Toolbar({ tools }) {
  return (
    <div className="flex h-[43px] items-center overflow-hidden bg-white">
      {tools.map((item, i) => (
        <ToolItem key={i} item={item} />
      ))}
    </div>
  );
}

function RoundButton({ children, active, label }) {
  return (
    <button
      aria-label={label}
      className={clsx(
        'flex size-[35px] shrink-0 items-center justify-center rounded-full border-2',
        active ? 'border-[#777] text-black' : 'border-[#b5b5b5] bg-[#f4f4f4] text-[#aaa]'
      )}
    >
      {children}
    </button>
  );
}

function PropertyBar({ kind, count, next, configClass }) {
  return (
    <div className="flex h-[43px] items-center overflow-hidden border-t-2 border-[#a9a9a9] bg-linear-to-b from-[#dedede] to-[#cacaca] pb-[3px] pl-1 font-bold">
      <RoundButton active label="Expand"><ChevronDown className="size-4" strokeWidth={4} /></RoundButton>
      <span className="ml-1.5">{kind}</span>
      <span className="ml-4 mr-2">{count} Properties</span>
      <RoundButton label="Previous"><ChevronLeft className="size-4" strokeWidth={3} /></RoundButton>
      <span className="ml-1"><RoundButton label="Next" active={next}><ChevronRight className="size-4" strokeWidth={4} /></RoundButton></span>
      <div className={clsx('ml-auto flex shrink-0 items-center gap-[5px] whitespace-nowrap', configClass)}>
        <span className="mr-1">Configuration 1/1</span>
        <RoundButton label="Previous configuration"><ChevronLeft className="size-4" strokeWidth={3} /></RoundButton>
        <RoundButton label="Next configuration"><ChevronRight className="size-4" strokeWidth={3} /></RoundButton>
      </div>
    </div>
  );
}

function EditorTab({ icon, title, active }) {
  return (
    <div className="flex h-[38px] items-end border-b-2 border-[#a9a9a9] bg-[#dedede]">
      <div className={clsx('-mb-0.5 flex h-[33px]', active ? 'text-[#d4e3f9]' : 'text-white')}>
        <svg viewBox="0 0 34 33" className="h-[33px] w-[34px]" aria-hidden="true">
          <path d="M3 33C16 31 14 1 32 1h2v32z" fill="currentColor" />
          <path d="M0 32C18 32 14 1 32 1h2" fill="none" stroke="#a9a9a9" strokeWidth="2" />
        </svg>
        <div className={clsx('flex items-center gap-[9px] rounded-tr border-r-2 border-t-2 border-[#a9a9a9] pl-1 pr-3', active ? 'bg-[#d4e3f9]' : 'bg-white')}>
          <Icon name={icon} className="size-5" />
          <span className="whitespace-nowrap text-black">{title}</span>
          <button className="text-gray-600" aria-label={`Close ${title}`}>
            <svg viewBox="0 0 14 14" className="size-3.5"><path d="M1 1l12 12M13 1L1 13" stroke="currentColor" strokeWidth="2.500" /></svg>
          </button>
        </div>
      </div>
    </div>
  );
}

function DataGrid({ columns, rows, tint, closed }) {
  const line = tint ? 'border-[#c6c8d8]' : 'border-[#cccccc]';
  return (
    <div className={clsx('w-fit overflow-hidden rounded-l-xl border-2 border-[#8b9fb2]', closed && 'rounded-r-xl')}>
      <table className="w-0 table-fixed border-separate border-spacing-0 text-xl leading-6">
        <colgroup>
          <col className="w-[25px]" />
          {columns.map((col) => [
            <col key={col.label} className={col.width} />,
            col.solve && <col key={`${col.label}-solve`} className="w-[31px]" />,
          ])}
        </colgroup>
        <thead>
          <tr className="h-[35px] bg-[#dddddd]">
            <th className="border-r border-[#a9a9a9] bg-[#cfcfcf] p-0 align-bottom" aria-label="Select all">
              <svg viewBox="0 0 14 14" className="mb-1 ml-auto mr-0.5 size-3.5"><path d="M14 0v14H0z" fill="#8b8b8b" /></svg>
            </th>
            {columns.map((col) => (
              <th key={col.label} colSpan={col.solve ? 2 : 1} className="whitespace-nowrap border-r border-[#a9a9a9] p-0 text-center font-bold last:border-r-0">
                {col.label}
              </th>
            ))}
          </tr>
        </thead>
        <tbody>
          {rows.map((row) => (
            <tr key={row.id} className={clsx('group h-9 last:h-[34px]', tint ? 'bg-[#d2d1fb]' : 'bg-white')}>
              <th className="border-b-2 border-[#b5b5b5] bg-[#e2e2e2] p-0 pt-0.5 text-center font-bold group-last:border-b-0">{row.id}</th>
              <td className={clsx('border-b-2 border-r p-0 pt-0.5 group-last:border-b-0', line, row.selected && 'bg-black text-white')}>
                <div className="flex items-center justify-between pl-1 pr-2">
                  {row.name && <span>{row.name}</span>}
                  <span className={clsx('flex items-center gap-2', !tint && 'ml-auto')}>
                    <select aria-label={`Type of row ${row.id}`} className="appearance-none bg-transparent">
                      <option>{row.type}</option>
                    </select>
                    <Caret className="h-2 w-2.5 text-[#a9a9a9]" />
                  </span>
                </div>
              </td>
              {row.cells.map((cell, i) => [
                <td
                  key={i}
                  className={clsx(
                    'whitespace-nowrap border-b-2 border-r p-0 pr-[3px] pt-0.5 group-last:border-b-0',
                    line,
                    cell === 'N-BK7' ? 'pl-1 text-left' : 'text-right'
                  )}
                >
                  {cell}
                </td>,
                columns[i + 1].solve && (
                  <td key={`${i}-solve`} className={clsx('border-b-2 border-r p-0 pt-0.5 text-center last:border-r-0 group-last:border-b-0', line)}>
                    {row.flags?.[i]}
                  </td>
                ),
              ])}
            </tr>
          ))}
        </tbody>
      </table>
    </div>
  );
}

const drawTools = (grey) => [
  { icon: 'refresh', fade: true }, { icon: 'copy' }, { icon: 'save' }, { icon: 'print' }, 'sep',
  { icon: 'pencil', fade: true }, { icon: 'square', grey }, { icon: 'arrow', grey }, { icon: 'line', grey }, { icon: 'textA', grey }, { icon: 'caliper', grey }, 'sep',
  { icon: 'axes', caret: true }, { icon: 'triad', on: true }, { icon: 'rotateBox', on: true },
  { icon: 'move' }, { icon: 'search' }, { icon: 'undoBox' }, 'sep',
];

const faceRow1 = [
  ...drawTools(true),
  { text: 'X|Y', className: 'w-[35px] text-sm font-semibold' },
  { text: 'Y|Z', className: 'w-[35px] text-sm font-semibold' },
  { text: 'X|Z', className: 'w-[35px] text-sm font-semibold' },
  { icon: 'noAxes' }, { icon: 'noScale' },
];
const faceRow2 = [
  'sep', { icon: 'blueCube', on: true }, { icon: 'cylinder', on: true },
  { text: 'Solid', caret: true, className: 'w-[74px]' }, { icon: 'gradient', caret: true }, { icon: 'flashlight', on: true }, 'sep',
  { icon: 'unlock', fade: true }, 'sep', { icon: 'target', on: true }, { icon: 'windows', fade: true }, { icon: 'clock' }, 'sep',
  { text: 'Line Thickness', caret: true, className: 'pl-3.5 pr-3' }, 'help',
];
const layoutRow1 = [
  ...drawTools(false), { icon: 'lock' }, 'sep', { icon: 'target', on: true }, { icon: 'windows' }, { icon: 'clock' }, 'sep',
];
const layoutRow2 = [{ text: 'Line Thickness', caret: true, className: 'pr-2.5' }, 'sep', 'help'];

function GraphicWindow({ title, icon, rows, faded, className, children, footer }) {
  return (
    <section className={clsx('absolute rounded-sm border-2 border-[#a9a9a9] bg-linear-to-b from-white from-10% to-[#dcdcdc]', className)}>
      <div className="flex h-[34px] items-center border-b-2 border-[#b5b5b5] pl-2 pr-4">
        <Icon name={icon} className="size-[22px]" />
        <h3 className="ml-[7px]">{title}</h3>
        <div className="ml-auto flex items-center gap-[18px] text-gray-700">
          <button aria-label="Window menu"><Caret className="h-2 w-3" /></button>
          <button aria-label="Minimize"><svg viewBox="0 0 12 12" className="size-3"><path d="M0 8h12" stroke="currentColor" strokeWidth="3" /></svg></button>
          <button aria-label="Maximize"><svg viewBox="0 0 12 12" className="size-3"><path d="M1 1h10v10H1zM1 2h10" fill="none" stroke="currentColor" strokeWidth="2" /></svg></button>
          <button aria-label="Close"><svg viewBox="0 0 12 12" className="size-3"><path d="M1 0l10 12M11 0L1 12" stroke="currentColor" strokeWidth="2" /></svg></button>
        </div>
      </div>
      <div className="flex h-[38px] items-end">
        <button className="flex h-[34px] items-center gap-1.5 pl-[9px] pr-[5px]">
          <span className="flex size-6 items-center justify-center rounded-full border border-gray-400"><ChevronDown className="size-3.5" strokeWidth={3} /></span>
          Settings
        </button>
        <Sep />
        {rows[0].map((item, i) => <ToolItem key={i} item={item} faded={faded} />)}
      </div>
      <div className={clsx('mb-1 flex h-9 items-end', faded ? 'pl-[7px]' : 'pl-3.5')}>
        {rows[1].map((item, i) => <ToolItem key={i} item={item} faded={faded} />)}
      </div>
      {children}
      {footer}
    </section>
  );
}

function FaceView() {
  return (
    <svg viewBox="0 0 884 660" className="mx-1.5 mb-[7px] block w-[884px]" role="img" aria-label="Shaded lens">
      <defs>
        <linearGradient id="sky" x1="0" y1="0" x2="0" y2="1">
          <stop offset="0" stopColor="#001880" />
          <stop offset="0.2" stopColor="#293d95" />
          <stop offset="0.4" stopColor="#5b69b0" />
          <stop offset="0.6" stopColor="#929bc4" />
          <stop offset="0.8" stopColor="#cccddc" />
          <stop offset="0.93" stopColor="#eeece8" />
          <stop offset="1" stopColor="#fffbec" />
        </linearGradient>
        <linearGradient id="rim" gradientUnits="userSpaceOnUse" x1="800" y1="100" x2="1100" y2="1200">
          <stop offset="0" stopColor="#a45000" />
          <stop offset="0.2" stopColor="#ac5700" />
          <stop offset="0.55" stopColor="#8c4600" />
          <stop offset="0.92" stopColor="#452200" />
          <stop offset="1" stopColor="#452200" />
        </linearGradient>
        <linearGradient id="disc" gradientUnits="userSpaceOnUse" x1="850" y1="400" x2="430" y2="830">
          <stop offset="0" stopColor="#7a7986" />
          <stop offset="0.35" stopColor="#666571" />
          <stop offset="1" stopColor="#53535e" />
        </linearGradient>
        <filter id="soft"><feGaussianBlur stdDeviation="8" /></filter>
      </defs>
      <rect width="884" height="660" fill="url(#sky)" />
      <text x="852" y="96" fontSize="56" fontWeight="700" textAnchor="end" fill="#1d2f82">Ansys</text>
      <text x="852" y="132" fontSize="26" fontWeight="700" textAnchor="end" fill="#213384">2025 R1</text>
      <path d="M172 503 L258 456 L380 520 L600 584 L712 680 L420 680 Q255 590 172 503z" fill="#000" filter="url(#soft)" />
      <g transform="translate(-15 9) scale(0.5867 0.4337)">
        <path d="M440 232L490 190 556 140 626 86 680 60 745 56 810 77 878 121 945 184 1012 270 1075 370 1125 475 1170 600 1200 712 1218 828 1225 940 1218 1045 1198 1130 1165 1200 1115 1252 1030 1315 930 1398 700 1100z" fill="url(#rim)" />
        <path d="M930 1398L1030 1315 1115 1252 1030 1322z" fill="#a85500" />
        <path d="M440 232L485 210 556 206 622 226 688 270 755 334 823 418 880 515 935 625 980 742 1012 868 1030 978 1035 1088 1030 1190 1008 1280 975 1345 932 1397 875 1424 815 1427 748 1406 680 1361 610 1295 545 1215 485 1115 435 1010 387 882 358 770 338 655 332 545 338 440 360 350 395 280z" fill="url(#disc)" />
      </g>
      <circle cx="61" cy="609" r="18" fill="#b9b9b9" />
      <g strokeWidth="6">
        <path d="M61 624L38 611" stroke="#d41a1a" />
        <path d="M61 624L85 611" stroke="#1717c8" />
        <path d="M61 625v-28" stroke="#0fa51a" />
      </g>
      <path d="M61 592l6 9H55z" fill="#0fb51a" />
      <path d="M34 608l9-1-3 10z" fill="#b01010" />
      <path d="M88 608l-9-1 3 10z" fill="#1010a8" />
      <g fontSize="23" textAnchor="middle" className="font-['Liberation_Sans',sans-serif]">
        <text x="31" y="606" fill="#f01818">X</text>
        <text x="62" y="589" fill="#16e616">Y</text>
        <text x="92" y="604" fill="#1c1cf0">Z</text>
      </g>
    </svg>
  );
}

const rayOffsets = [-16, -13, -10, -8, -5, -3, 0, 3, 5, 8, 10, 13, 16];

function LayoutView() {
  return (
    <div className="mx-1.5 border-2 border-t-0 border-white bg-black font-['DejaVu_Sans_Mono',monospace] text-white">
      <svg viewBox="0 0 880 529" className="block w-full" role="img" aria-label="Ray layout">
        <text x="846" y="97" fontSize="56" fontWeight="700" textAnchor="end" fill="#262626" className="font-['Open_Sans',sans-serif]">Ansys</text>
        <text x="846" y="133" fontSize="27" fontWeight="700" textAnchor="end" fill="#262626" className="font-['Open_Sans',sans-serif]">2025 R1</text>
        <g fill="none" stroke="#e6a000" strokeWidth="2">
          {rayOffsets.map((dy) => (
            <path key={dy} d={`M44 264L650 ${264 + dy}L682 ${264 + dy}L868 264`} />
          ))}
        </g>
        <path d="M44 262L410 255V273L44 267zM750 257L868 262V266L750 272z" fill="#e6a000" />
        <g fill="none" stroke="#fff" strokeWidth="3">
          <path d="M649 227v74" />
          <path d="M658 225h15q4 0 5 8 5 31 0 62-1 8-5 8h-15q-4 0-5-8-3-31 0-62 1-8 5-8z" />
          <path d="M656 227v74M676 227v74" strokeWidth="2" />
          <path d="M653 264h28" strokeWidth="2" />
          <path d="M869 261v6" />
        </g>
        <path d="M47 455q23 3 26 27H47z" fill="#484848" />
        <path d="M46 484v-29" stroke="#17c422" strokeWidth="5" />
        <path d="M46 447l5 9H41z" fill="#0f9a18" />
        <path d="M46 482h31" stroke="#1818f0" strokeWidth="6" />
        <circle cx="46" cy="484" r="4" fill="#e81818" />
        <g textAnchor="middle" fontSize="22" className="font-['Liberation_Sans',sans-serif]">
          <text x="47" y="441" fill="#18c818">Y</text>
          <text x="89" y="481" fill="#1c1cf0">Z</text>
        </g>
        <path d="M264 515h302" stroke="#e4e4e4" strokeWidth="4" />
        <path d="M264 509v12M324 512v6M385 512v6M445 512v6M506 512v6M566 509v12" stroke="#e4e4e4" strokeWidth="2" />
        <text x="575" y="522" fontSize="20" fill="#d8d8d8" className="font-['Roboto',sans-serif]">100 mm</text>
      </svg>
      <div className="border-t-2 border-white text-center text-[15px] leading-[22px]">3D Layout</div>
      <div className="flex h-[108px] border-t-2 border-white">
        <div className="flex-1 pl-[15px] pt-[18px] text-sm">23/02/2026</div>
        <div className="flex w-[293px] flex-col border-l-2 border-white text-center">
          <div className="h-16 pt-[18px] text-xs leading-[14px]">
            <p>Zemax</p>
            <p className="pr-2">Ansys Zemax OpticStudio 2024 R1.00</p>
          </div>
          <div className="border-t-2 border-white pt-1 text-[15px] leading-[17px]">
            <p>LENS.zmx</p>
            <p>Configuration 1 of 1</p>
          </div>
        </div>
      </div>
    </div>
  );
}

function LayoutTabs() {
  return (
    <div className="mt-1.5 flex h-8 items-start border-t-2 border-[#777] bg-[#cccccc] pl-2">
      <button className="relative -mt-0.5 flex h-[30px] w-[112px] items-center justify-center pl-3">
        <svg viewBox="0 0 112 30" className="absolute inset-0 h-[30px] w-[112px]" aria-hidden="true">
          <path d="M4 0C20 1 14 29 30 29H111V0z" fill="#d4e3f9" />
          <path d="M0 1C22 1 14 29 30 29H111V0" fill="none" stroke="#777" strokeWidth="2" />
        </svg>
        <span className="relative">Graph</span>
      </button>
      <button className="h-[29px] w-[94px] rounded-b-md border-2 border-t-0 border-l-0 border-[#777] bg-[#dedede] pr-1.5 leading-6">Classic</button>
    </div>
  );
}

export default function App() {
  return (
    <div className="flex min-h-screen flex-col overflow-hidden bg-[#dedede] font-['Open_Sans','Noto_Sans',sans-serif] text-[17px] leading-6 text-black">
      <Defs />
      <Ribbon />
      <div className="flex flex-1">
        <SystemExplorer />
        <main className="flex min-w-0 flex-1 flex-col overflow-hidden border-l-8 border-[#808080]">
          <section>
            <EditorTab icon="lensDoc" title="Lens Data" active />
            <div className="border-t-3 border-[#bcd5f6]"><Toolbar tools={lensTools} /></div>
            <PropertyBar kind="Surface" count={0} next configClass="mr-[315px]" />
            <div className="overflow-hidden bg-linear-to-b from-[#fafafa] to-[#dedede] pb-[58px] pl-[7px] pt-[15px]">
              <DataGrid columns={lensColumns} rows={lensRows} />
            </div>
          </section>
          <section className="flex flex-1 flex-col border-t-8 border-[#808080]">
            <EditorTab icon="nscDoc" title="Non-Sequential Component Editor: Component Group on Surface 2" />
            <div className="bg-white pt-[3px]"><Toolbar tools={objectTools} /></div>
            <PropertyBar kind="Object" count={1} configClass="-mr-[219px]" />
            <div className="relative flex-1 bg-linear-to-b from-[#fefefe] to-[#e0e0e0] pl-[7px] pt-3.5">
              <DataGrid columns={objectColumns} rows={objectRows} tint closed />
              <GraphicWindow title="Object 1: Face 0" icon="cube" rows={[faceRow1, faceRow2]} faded className="left-[379px] top-[230px] w-[900px]">
                <FaceView />
              </GraphicWindow>
              <GraphicWindow title="1: 3D Layout" icon="layout" rows={[layoutRow1, layoutRow2]} className="left-[1293px] top-[232px] w-[900px]" footer={<LayoutTabs />}>
                <LayoutView />
              </GraphicWindow>
            </div>
          </section>
        </main>
      </div>
    </div>
  );
}
